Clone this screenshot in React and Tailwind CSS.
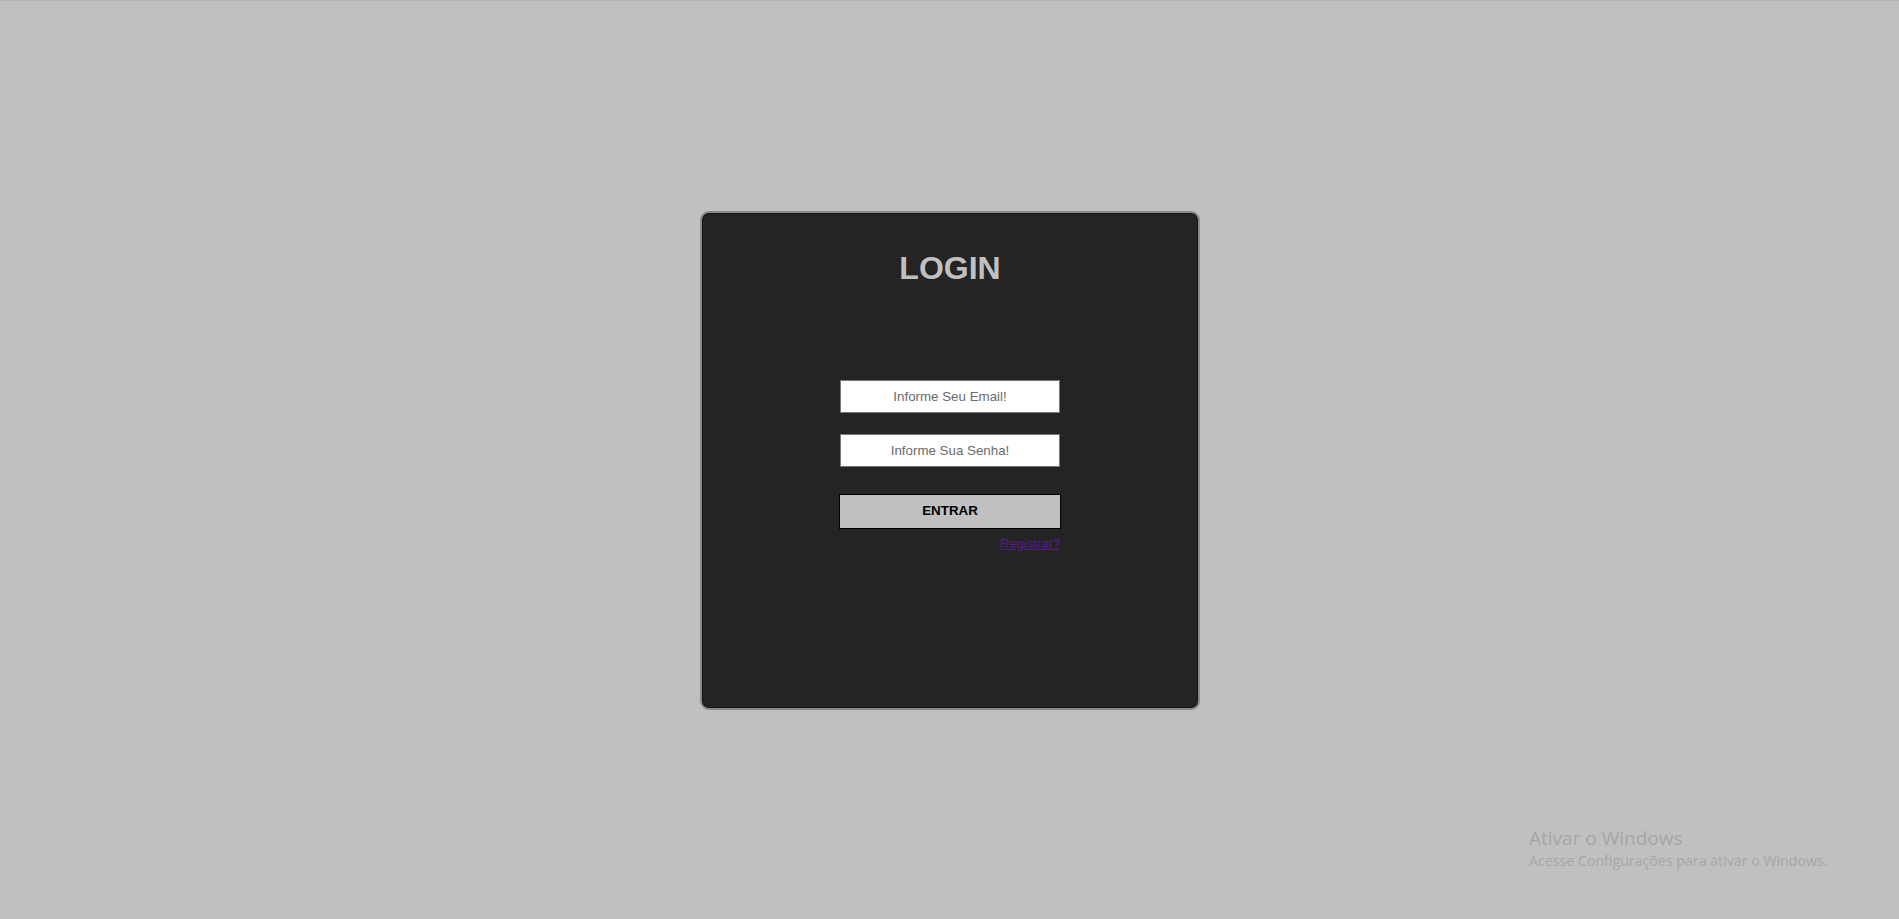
export default function App() {
  return (
    <div
      className="relative min-h-screen w-full bg-[#c0c0c0] border-t border-[#b3b3b3] flex items-center justify-center pl-[1px]"
      style={{ fontFamily: '"Liberation Sans", Arial, sans-serif' }}
    >
      <div className="w-[500px] h-[499px] bg-[#242424] rounded-[9px] border-2 border-[#8a8a8a] shadow-[inset_0_0_0_1px_#151515] flex flex-col items-center">
        <h1 className="mt-[37px] text-[32px] leading-[37px] font-bold text-[#c0c0c0]">LOGIN</h1>
        <form className="mt-[93px] w-[222px] flex flex-col items-center" onSubmit={(e) => e.preventDefault()}>
          <input
            type="email"
            placeholder="Informe Seu Email!"
            className="w-[220px] h-[33px] bg-white border border-[#767676] text-center text-[13.33px] text-[#333] placeholder:text-[#6b6b6b] outline-none"
          />
          <input
            type="password"
            placeholder="Informe Sua Senha!"
            className="mt-[21px] w-[220px] h-[33px] bg-white border border-[#767676] text-center text-[13.33px] text-[#333] placeholder:text-[#6b6b6b] outline-none"
          />
          <button
            type="submit"
            className="mt-[27px] w-[222px] h-[35px] bg-[#c0c0c0] border border-black text-[13.33px] font-bold text-black"
          >
            ENTRAR
          </button>
          <div className="w-[220px] flex justify-end mt-[7px]">
            <a href="#" className="text-[13px] leading-[15px] text-[#551a8b] underline">Registrar?</a>
          </div>
        </form>
      </div>
      <div
        className="absolute left-[1529px] top-[825px] text-[#a6a6a6] pointer-events-none"
        style={{ fontFamily: '"Open Sans", "Noto Sans", sans-serif' }}
      >
        <div className="text-[19px] leading-[25px]">Ativar o Windows</div>
        <div className="text-[14.2px] leading-[19px]">Acesse Configurações para ativar o Windows.</div>
      </div>
    </div>
  );
}
